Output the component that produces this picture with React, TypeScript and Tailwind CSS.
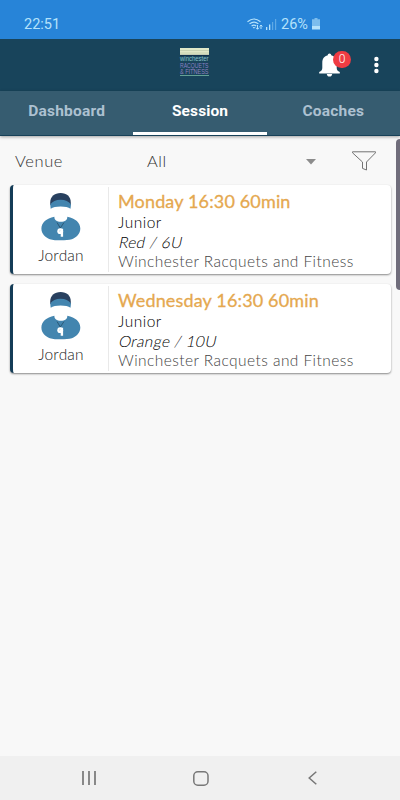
import React from 'react';

interface Session {
  id: number;
  coach: string;
  time: string;
  group: string;
  level: string;
  venue: string;
}

const sessions: Session[] = [
  {
    id: 1,
    coach: 'Jordan',
    time: 'Monday 16:30 60min',
    group: 'Junior',
    level: 'Red / 6U',
    venue: 'Winchester Racquets and Fitness',
  },
  {
    id: 2,
    coach: 'Jordan',
    time: 'Wednesday 16:30 60min',
    group: 'Junior',
    level: 'Orange / 10U',
    venue: 'Winchester Racquets and Fitness',
  },
];

const tabs = ['Dashboard', 'Session', 'Coaches'];

const StatusBar: React.FC = () => (
  <div className="flex h-[39px] shrink-0 items-start bg-[#2784d8] pt-[15px] pl-6 font-['Roboto',sans-serif] text-[14.5px] leading-5 text-[#b5e2fb]">
    <span className="w-[223px]">22:51</span>
    {/* Wifi with data arrows */}
    <svg className="mt-[3px] h-3 w-4" viewBox="0 0 16 12" fill="none" stroke="currentColor" strokeWidth="1.2">
      <path d="M.5 3.7Q7 -1.7 13.5 3.7M2.5 5.9Q7 2.2 11.4 5.9M4.6 8Q7 6.1 9.2 8" />
      <path d="M5.7 9.1 7 10.7l1.1-1.6z" fill="currentColor" stroke="none" />
      <path d="M10.5 7v4M9 9.7l1.5 1.6L12 9.7M14 11V7M12.7 8.5 14 7l1.4 1.5" strokeWidth="1" />
    </svg>
    <svg className="mt-1 ml-[3px] h-[11px] w-3" viewBox="0 0 12 11" fill="currentColor">
      <path d="M0 8h1.3v3H0z" />
      <path d="M3 5.5h1.3V11H3z" />
      <path d="M6 3h1.2v8H6zM9 0h1.2v11H9z" opacity=".4" />
    </svg>
    <span className="ml-[3px] w-[30px]">26%</span>
    <svg className="mt-[3px] ml-px h-3 w-2" viewBox="0 0 8 12" fill="currentColor">
      <path d="M2.5 0h3v1.3H8V8H0V1.3h2.5z" opacity=".6" />
      <path d="M0 8h8v3.5H0z" />
    </svg>
  </div>
);

const ClubLogo: React.FC = () => (
  <svg className="h-7 w-[29px] overflow-visible" viewBox="0 0 29 28" fontFamily="Liberation Sans, sans-serif">
    <path d="M0 0h29v7H0z" fill="#e0e8c8" />
    <path d="M0 2.5h29M0 5h29" stroke="#b6c4a2" strokeWidth=".6" />
    <path d="M0 7.3h29" stroke="#0b2440" strokeWidth=".7" />
    <text x="0" y="13.2" fontSize="6.7" fill="#84c0c8" textLength="28.5" lengthAdjust="spacingAndGlyphs">winchester</text>
    <text x="0" y="19.7" fontSize="6.9" fill="#8880c4" textLength="28.5" lengthAdjust="spacingAndGlyphs">RACQUETS</text>
    <text x="0" y="26.2" fontSize="6.7" fill="#8e80be" textLength="28.5" lengthAdjust="spacingAndGlyphs">&amp; FITNESS</text>
    <path d="M0 27.5h29" stroke="#78b8a4" strokeWidth=".8" />
  </svg>
);

const AppBar: React.FC = () => (
  <header className="flex h-[52px] shrink-0 items-start bg-[#18445b] pt-[9px] pl-[180px]">
    <ClubLogo />
    <button aria-label="Notifications" className="relative mt-[5px] ml-[110px] h-6 w-[21px]">
      <svg className="h-6 w-[21px]" viewBox="0 0 21 24" fill="white">
        <path d="M10.5.5c1 0 1.7.7 1.7 1.8 3.6.8 5.5 3.6 5.5 7.5v5.1c0 2 1 3.1 3.1 4.1v1.5H.2V19c2.1-1 3.1-2.1 3.1-4.1V9.8c0-3.9 1.9-6.7 5.5-7.5 0-1.1.7-1.8 1.7-1.8zM7.8 21h5.4c-.2 1.7-1.2 2.6-2.7 2.6S8 22.7 7.8 21z" />
      </svg>
      <span className="absolute -top-[2px] left-[14px] h-[17px] w-[18px] rounded-full bg-[#ef3c43] text-center font-['Roboto',sans-serif] text-[12px] leading-[17px] font-light text-white">
        0
      </span>
    </button>
    <button aria-label="More" className="mt-[8px] ml-[34px]">
      <svg className="h-[18px] w-[5px]" viewBox="0 0 5 18" fill="white">
        <circle cx="2.4" cy="3" r="2.2" />
        <circle cx="2.4" cy="9" r="2.2" />
        <circle cx="2.4" cy="15" r="2.2" />
      </svg>
    </button>
  </header>
);

const Avatar: React.FC = () => (
  <svg className="h-12 w-10" viewBox="0 0 40 48">
    <path d="M9.2 12V9.5C9.2 3.8 13.4 0 19.6 0s10.2 3.8 10.2 9.500V12z" fill="#28405f" />
    <path d="M9.2 11.500Q12.500 6.800 19.600 6.800t10.400 4.700l-.5 4.300q-3.200-2.300-9.900-2.300t-9.900 2.300z" fill="#4385af" />
    <path d="M13.4 23.800c-8.200 1.600-13 5.900-13 11.800 0 5.500 4 9 8.500 10.700 3 1 6.500 1 11 1s8-.1 11-1c4.500-1.700 8.400-5.200 8.400-10.700 0-5.900-4.800-10.200-13-11.800.2 3.200-2.300 5-6.400 5s-6.700-1.800-6.500-5z" fill="#4385af" />
    <path d="m16 29.500 3.300 5.500 3.700-5.500" fill="none" stroke="#244c66" strokeWidth=".8" />
    <circle cx="19.2" cy="38.200" r="2.900" fill="white" />
    <path d="M19.200 35.800h2.900v8h-2.400v-3.300z" fill="white" />
    <path d="m18.200 38.200 1.100-.5" stroke="#87b4cc" strokeWidth=".6" />
  </svg>
);

const SessionCard: React.FC<{ session: Session }> = ({ session }) => (
  <article className="flex h-[89px] rounded-sm border-l-[3px] border-[#143c57] bg-white shadow-[0_1px_2px_rgba(0,0,0,0.45)]">
    <div className="my-[2px] flex w-[96px] shrink-0 flex-col items-center border-r border-[#e9e9e9] pt-[6px] pl-[1px]">
      <Avatar />
      <span className="mt-[5px] text-[15.5px] leading-[19px] font-light tracking-[0.2px] text-[#222]">{session.coach}</span>
    </div>
    <div className="pt-[6px] pl-[9px] text-[15.5px] leading-[19.5px] font-light whitespace-nowrap text-black">
      <h2 className="mb-[2px] text-[18px] leading-5 font-normal tracking-[0.15px] text-[#e5a84f] [-webkit-text-stroke:0.3px_#e5a84f]">
        {session.time}
      </h2>
      <p className="tracking-[0.5px]">{session.group}</p>
      <p className="origin-left -skew-x-12 pl-[1px] tracking-[0.35px]">{session.level}</p>
      <p className="tracking-[0.44px] text-[#444]">{session.venue}</p>
    </div>
  </article>
);

const App: React.FC = () => {
  return (
    <div className="flex h-[800px] w-[400px] flex-col overflow-hidden bg-[#f8f8f8] font-['Lato',sans-serif]">
      <StatusBar />
      <AppBar />
      <nav className="grid h-[45px] shrink-0 grid-cols-3 border-b border-[#174158] bg-[#365c70] font-['Roboto',sans-serif] text-[15.5px] font-bold shadow-[0_1px_3px_rgba(0,0,0,0.35)]">
        {tabs.map((tab) => (
          <button
            key={tab}
            className={
              tab === 'Session'
                ? 'border-b-[3px] border-white tracking-[0.1px] text-white'
                : 'border-b-[3px] border-transparent tracking-[0.2px] text-[#adc1d1]'
            }
          >
            {tab}
          </button>
        ))}
      </nav>

      <main className="flex min-h-0 flex-1">
        <div className="w-[391px] pl-[10px]">
          {/* Venue filter */}
          <div className="flex h-[49px] items-center pl-[5px] text-[16.5px] font-light tracking-[0.6px] text-[#333]">
            <span className="w-[132px] pt-[2px]">Venue</span>
            <span className="w-[159px] pt-[2px]">All</span>
            <svg className="mt-[2px] h-[6px] w-[10px]" viewBox="0 0 10 6" fill="#8c8c8c">
              <path d="M0 0h10L5 5.5z" />
            </svg>
            <svg className="ml-[36px] h-5 w-6" viewBox="0 0 24 20" fill="none" stroke="#737373" strokeWidth="1">
              <path d="M.5.8h23v1L14.5 11v8l-4-1.6V11L.5 1.8z" />
            </svg>
          </div>
          <div className="flex flex-col gap-[10px]">
            {sessions.map((session) => (
              <SessionCard key={session.id} session={session} />
            ))}
          </div>
        </div>
        <div className="mt-[3px] ml-[5px] h-[151px] w-1 rounded-l bg-[#706d7b]" />
      </main>

      <footer className="flex h-11 shrink-0 items-center bg-[#f0f0f0] text-[#777]">
        <svg className="ml-[81px] h-[14px] w-[15px]" viewBox="0 0 15 14" stroke="currentColor" strokeWidth="1.7">
          <path d="M2 0v14M8 0v14M14 0v14" />
        </svg>
        <svg className="ml-[97px] h-[15px] w-4" viewBox="0 0 16 15" fill="none" stroke="currentColor" strokeWidth="1.5">
          <rect x=".8" y=".8" width="14.2" height="13.4" rx="4" />
        </svg>
        <svg className="ml-[99px] h-[14px] w-[9px]" viewBox="0 0 9 14" fill="none" stroke="currentColor" strokeWidth="1.5">
          <path d="M8.3.7 1.2 7l7.1 6.3" />
        </svg>
      </footer>
    </div>
  );
};

export default App;
